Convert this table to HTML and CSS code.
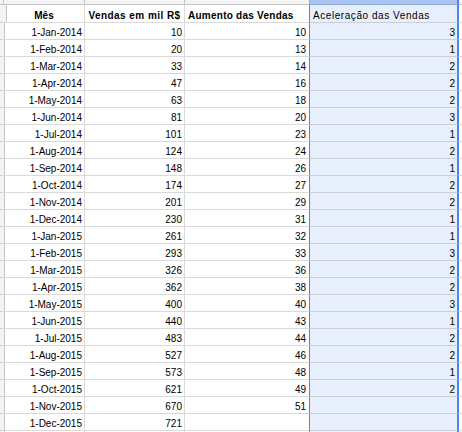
FILE: index.html
```html
<!DOCTYPE html>
<html>
<head>
<meta charset="utf-8">
<link rel="stylesheet" href="styles.css">
</head>
<body>
<div class="sheet">
  <div class="row band">
    <div class="c rh"></div><div class="c a"></div><div class="c b"></div><div class="c cc"></div><div class="c d"></div><div class="c e"></div>
  </div>
  <div class="row head">
    <div class="c rh"></div>
    <div class="c a h center">Mês</div>
    <div class="c b h center ls1">Vendas em mil R$</div>
    <div class="c cc h left ls2">Aumento das Vendas</div>
    <div class="c d left ls3">Aceleração das Vendas</div>
    <div class="c e"></div>
  </div>
  <div id="rows"></div>
</div>
<script src="script.js"></script>
</body>
</html>
```
FILE: script.js
```js
var data = [
["1-Jan-2014","10","10","3"],
["1-Feb-2014","20","13","1"],
["1-Mar-2014","33","14","2"],
["1-Apr-2014","47","16","2"],
["1-May-2014","63","18","2"],
["1-Jun-2014","81","20","3"],
["1-Jul-2014","101","23","1"],
["1-Aug-2014","124","24","2"],
["1-Sep-2014","148","26","1"],
["1-Oct-2014","174","27","2"],
["1-Nov-2014","201","29","2"],
["1-Dec-2014","230","31","1"],
["1-Jan-2015","261","32","1"],
["1-Feb-2015","293","33","3"],
["1-Mar-2015","326","36","2"],
["1-Apr-2015","362","38","2"],
["1-May-2015","400","40","3"],
["1-Jun-2015","440","43","1"],
["1-Jul-2015","483","44","2"],
["1-Aug-2015","527","46","2"],
["1-Sep-2015","573","48","1"],
["1-Oct-2015","621","49","2"],
["1-Nov-2015","670","51",""],
["1-Dec-2015","721","",""],
["","","",""]
];
var host = document.getElementById("rows");
var html = "";
data.forEach(function (r) {
  html += '<div class="row data">' +
    '<div class="c rh"></div>' +
    '<div class="c a num">' + r[0] + '</div>' +
    '<div class="c b num">' + r[1] + '</div>' +
    '<div class="c cc num">' + r[2] + '</div>' +
    '<div class="c d num">' + r[3] + '</div>' +
    '<div class="c e"></div>' +
    '</div>';
});
host.innerHTML = html;
```
FILE: styles.css
```css
html, body {
  margin: 0;
  padding: 0;
  background: #ffffff;
}
body {
  width: 462px;
  height: 432px;
  overflow: hidden;
  font-family: "Liberation Sans", Arial, sans-serif;
  font-size: 10px;
  color: #000;
}
.sheet {
  display: flex;
  flex-direction: column;
}
.row {
  display: grid;
  grid-template-columns: 4px 81px 100px 125px 149px 3px;
}
.c {
  box-sizing: border-box;
  border-right: 1px solid #dadada;
  border-bottom: 1px solid #dadada;
  white-space: nowrap;
  overflow: hidden;
}
.c.cc {
  border-right-color: #4a86e8;
}
.c.d {
  background: #e8effc;
  border-bottom-color: #c9ced8;
  border-right: 2px solid #4a86e8;
}
.c.rh {
  background: #f3f3f3;
  border-right-color: #c4c4c4;
  border-bottom-color: #d6d6d6;
}
.c.e {
  border-right: none;
}

/* column header band at top */
.band .c {
  height: 5px;
  background: #f3f3f3;
  border-bottom-color: #c4c4c4;
  border-right-color: #c4c4c4;
}
.band .c.d {
  background: #a9c2ee;
  border-bottom-color: #8eaee6;
  border-right: 2px solid #4a86e8;
}
.band .c.cc {
  border-right-color: #8eaee6;
}

/* header row */
.head .c {
  height: 18px;
  padding: 4px 3px 0 3px;
  line-height: 13px;
}
.h {
  font-weight: bold;
}
.center { text-align: center; }
.left { text-align: left; }
.ls1 { letter-spacing: 0.45px; padding-left: 2px; padding-right: 0; }
.ls2 { letter-spacing: 0.25px; }
.ls3 { letter-spacing: 0.56px; }

/* data rows */
.data .c {
  height: 17px;
  padding: 3px 2px 0 2px;
  line-height: 13px;
}
.num {
  text-align: right;
}
.data .c.cc {
  padding-right: 3px;
}
```
